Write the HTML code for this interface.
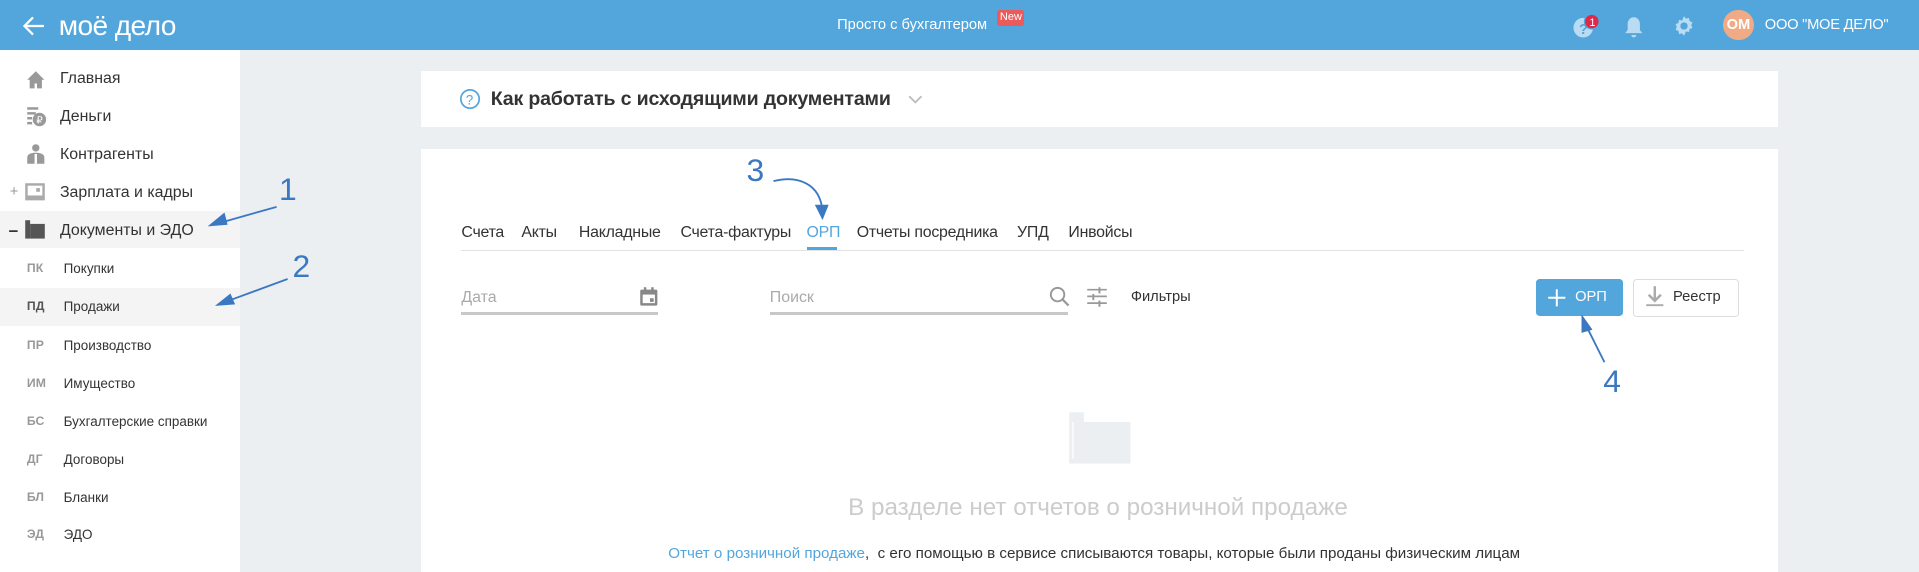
<!DOCTYPE html>
<html><head><meta charset="utf-8"><style>
html,body{margin:0;padding:0;overflow:hidden;width:1919px;height:572px;background:#eceff2}
#w{zoom:1.22385;width:1568px;height:468px;position:relative;font-family:"Liberation Sans",Arial,sans-serif;overflow:hidden;background:#eceff2}
.a{position:absolute;white-space:nowrap}
.hdr{left:0;top:0;width:1568px;height:41px;background:#53a6dc}
.sb{left:0;top:41px;width:196px;height:427px;background:#fff}
.it{font-size:13px;color:#333;left:49px}
.sc{font-size:10px;color:#999;left:22px;font-weight:bold}
.st{font-size:11px;color:#333;left:52px}
.card{background:#fff}
.tab{font-size:13px;color:#333;top:183px;letter-spacing:-0.2px}
.ann{color:#3a78c2;font-size:26px}
</style></head><body><div id="w">
<div class="a hdr"></div>
<svg class="a" style="left:18px;top:12px" width="20" height="18" viewBox="0 0 20 18"><path d="M18 9H3M9 2L2 9l7 7" stroke="#fff" stroke-width="1.8" fill="none"/></svg>
<div class="a" style="left:48px;top:8px;font-size:23px;color:#fff;letter-spacing:-0.5px">моё дело</div>
<div class="a" style="left:684px;top:14px;font-size:12px;color:#fff">Просто с бухгалтером</div>
<div class="a" style="left:815px;top:8px;width:22px;height:13px;background:#ec5b5b;color:#fff;font-size:9px;text-align:center;line-height:13px;border-radius:2px">New</div>
<svg class="a" style="left:1284px;top:11px" width="24" height="22"><circle cx="10" cy="12" r="8" fill="#b9dcf3"/><text x="6.5" y="17" font-size="12" font-weight="bold" fill="#53a6dc" font-family="Liberation Sans">?</text><circle cx="17" cy="7" r="6" fill="#e0294a" stroke="#53a6dc"/><text x="15" y="10.5" font-size="9" fill="#fff" font-family="Liberation Sans">1</text></svg>
<svg class="a" style="left:1327px;top:13px" width="16" height="18"><path d="M8 1c-3 0-5 2.5-5 5.5v5L1 14h14l-2-2.5v-5C13 3.5 11 1 8 1z M6 15.5h4a2 2 0 01-4 0z" fill="#b9dcf3"/></svg>
<svg class="a" style="left:1367px;top:12px" width="18" height="18" viewBox="0 0 18 18"><path d="M9 1l1.6 2 2.5-.6.4 2.5 2.4 1-1 2.3 1 2.3-2.4 1-.4 2.5-2.5-.6L9 17l-1.6-2-2.5.6-.4-2.5-2.4-1 1-2.3-1-2.3 2.4-1 .4-2.5 2.5.6z" fill="#b9dcf3"/><circle cx="9" cy="9" r="3" fill="#53a6dc"/></svg>
<div class="a" style="left:1408px;top:8px;width:25px;height:25px;border-radius:50%;background:#f0ab86;color:#fff;font-size:12px;font-weight:bold;text-align:center;line-height:25px">ОМ</div>
<div class="a" style="left:1442px;top:14px;font-size:12px;color:#fff;letter-spacing:-0.2px">ООО "МОЕ ДЕЛО"</div>

<div class="a sb"></div>
<div class="a" style="left:0;top:172px;width:196px;height:31px;background:#f4f4f4"></div>
<div class="a" style="left:0;top:235px;width:196px;height:31px;background:#f4f4f4"></div>
<svg class="a" style="left:21px;top:57px" width="16" height="16"><path d="M8 1L1 8h2v7h4v-4h2v4h4V8h2z" fill="#999"/></svg>
<svg class="a" style="left:21px;top:87px" width="17" height="17"><rect x="1" y="1" width="9" height="2" fill="#999"/><rect x="1" y="5" width="7" height="2" fill="#999"/><rect x="1" y="9" width="4" height="2" fill="#999"/><rect x="1" y="13" width="4" height="2" fill="#999"/><circle cx="11" cy="11" r="5.5" fill="#999"/><text x="8.5" y="14.5" font-size="8" fill="#fff" font-family="Liberation Sans">₽</text></svg>
<svg class="a" style="left:21px;top:117px" width="16" height="18"><circle cx="8" cy="4" r="3" fill="#999"/><path d="M1 17v-5c0-3 3-4 7-4s7 1 7 4v5z" fill="#999"/><path d="M7 9h2v8H7z" fill="#fff"/></svg>
<div class="a" style="left:8px;top:150px;font-size:12px;color:#999">+</div>
<svg class="a" style="left:20px;top:149px" width="18" height="16"><rect x="1" y="1" width="16" height="14" fill="#aaa"/><rect x="3" y="3" width="12" height="8" fill="#fff"/><rect x="10" y="5" width="3" height="3" fill="#aaa"/></svg>
<div class="a" style="left:7px;top:180px;font-size:14px;color:#333;font-weight:bold">–</div>
<svg class="a" style="left:20px;top:179px" width="18" height="17"><rect x="1" y="1" width="4" height="15" fill="#555"/><rect x="5" y="4" width="12" height="12" fill="#555"/></svg>
<div class="a it" style="top:57px">Главная</div>
<div class="a it" style="top:88px">Деньги</div>
<div class="a it" style="top:119px">Контрагенты</div>
<div class="a it" style="top:150px">Зарплата и кадры</div>
<div class="a it" style="top:181px">Документы и ЭДО</div>
<div class="a sc" style="top:213px">ПК</div><div class="a st" style="top:213px">Покупки</div>
<div class="a sc" style="top:244px;color:#555">ПД</div><div class="a st" style="top:244px">Продажи</div>
<div class="a sc" style="top:276px">ПР</div><div class="a st" style="top:276px">Производство</div>
<div class="a sc" style="top:307px">ИМ</div><div class="a st" style="top:307px">Имущество</div>
<div class="a sc" style="top:338px">БС</div><div class="a st" style="top:338px">Бухгалтерские справки</div>
<div class="a sc" style="top:369px">ДГ</div><div class="a st" style="top:369px">Договоры</div>
<div class="a sc" style="top:400px">БЛ</div><div class="a st" style="top:400px">Бланки</div>
<div class="a sc" style="top:431px">ЭД</div><div class="a st" style="top:431px">ЭДО</div>

<div class="a card" style="left:344px;top:58px;width:1109px;height:46px"></div>
<svg class="a" style="left:375px;top:72px" width="18" height="18"><circle cx="9" cy="9" r="7.5" fill="none" stroke="#53a6dc" stroke-width="1.4"/><text x="5.5" y="13.5" font-size="11" fill="#53a6dc" font-family="Liberation Sans">?</text></svg>
<div class="a" style="left:401px;top:72px;font-size:16px;color:#333;font-weight:bold;letter-spacing:-0.15px">Как работать с исходящими документами</div>
<svg class="a" style="left:742px;top:78px" width="12" height="8"><path d="M1 1l5 5 5-5" stroke="#bbb" stroke-width="1.5" fill="none"/></svg>

<div class="a card" style="left:344px;top:122px;width:1109px;height:346px"></div>
<div class="a tab" style="left:377px">Счета</div>
<div class="a tab" style="left:426px">Акты</div>
<div class="a tab" style="left:473px">Накладные</div>
<div class="a tab" style="left:556px">Счета-фактуры</div>
<div class="a tab" style="left:659px;color:#53a6dc">ОРП</div>
<div class="a tab" style="left:700px">Отчеты посредника</div>
<div class="a tab" style="left:831px">УПД</div>
<div class="a tab" style="left:873px">Инвойсы</div>
<div class="a" style="left:377px;top:204px;width:1048px;height:1px;background:#e3e3e3"></div>
<div class="a" style="left:659px;top:202px;width:25px;height:2px;background:#53a6dc"></div>

<div class="a" style="left:377px;top:236px;font-size:13px;color:#aaa">Дата</div>
<svg class="a" style="left:522px;top:234px" width="16" height="17"><rect x="1" y="3" width="14" height="13" rx="1" fill="#888"/><rect x="3" y="7" width="10" height="7" fill="#fff"/><rect x="4" y="1" width="2" height="4" fill="#888"/><rect x="10" y="1" width="2" height="4" fill="#888"/><rect x="9" y="10" width="3" height="3" fill="#888"/></svg>
<div class="a" style="left:377px;top:255px;width:161px;height:2px;background:#c8c8c8"></div>
<div class="a" style="left:629px;top:236px;font-size:13px;color:#aaa">Поиск</div>
<svg class="a" style="left:857px;top:234px" width="17" height="17"><circle cx="7" cy="7" r="5.5" stroke="#999" stroke-width="1.6" fill="none"/><path d="M11 11l5 5" stroke="#999" stroke-width="1.8"/></svg>
<div class="a" style="left:629px;top:255px;width:244px;height:2px;background:#c8c8c8"></div>
<svg class="a" style="left:887px;top:234px" width="18" height="17"><path d="M1 3h16M1 8.5h16M1 14h16" stroke="#999" stroke-width="1.4"/><path d="M11 1v5M6 6.5v5M11 12v5" stroke="#999" stroke-width="1.6"/></svg>
<div class="a" style="left:924px;top:236px;font-size:12px;color:#333">Фильтры</div>

<div class="a" style="left:1255px;top:228px;width:71px;height:30px;background:#53a6dc;border-radius:3px"></div>
<svg class="a" style="left:1264px;top:235px" width="16" height="16"><path d="M8 1v14M1 8h14" stroke="#fff" stroke-width="1.6"/></svg>
<div class="a" style="left:1287px;top:236px;font-size:12px;color:#fff">ОРП</div>
<div class="a" style="left:1334px;top:228px;width:85px;height:29px;border:1px solid #ddd;border-radius:3px;background:#fff"></div>
<svg class="a" style="left:1344px;top:233px" width="16" height="18"><path d="M8 1v11M3 8l5 5 5-5" stroke="#aaa" stroke-width="2" fill="none"/><path d="M1 16.5h14" stroke="#aaa" stroke-width="1.5"/></svg>
<div class="a" style="left:1367px;top:236px;font-size:12px;color:#333">Реестр</div>

<svg class="a" style="left:873px;top:336px" width="52" height="44"><path d="M1 1h12v8h38v34H1z" fill="#eceff2"/><path d="M4 9v30" stroke="#fff" stroke-width="1"/></svg>
<div class="a" style="left:693px;top:404px;font-size:19.8px;color:#ccc">В разделе нет отчетов о розничной продаже</div>
<div class="a" style="left:546px;top:445px;font-size:12.4px;color:#333"><span style="color:#53a6dc">Отчет о розничной продаже</span>,&nbsp; с его помощью в сервисе списываются товары, которые были проданы физическим лицам</div>

<div class="a ann" style="left:228px;top:140px">1</div>
<div class="a ann" style="left:239px;top:203px">2</div>
<div class="a ann" style="left:610px;top:124px">3</div>
<div class="a ann" style="left:1310px;top:297px">4</div>
<svg class="a" style="left:0;top:0" width="1568" height="468">
<g stroke="#3a78c2" stroke-width="1.5" fill="#3a78c2">
<path d="M226 169L180 182" fill="none"/><path d="M172 184l11-9 2 8z"/>
<path d="M235 228L186 246" fill="none"/><path d="M178 249l10-8 3 7z"/>
<path d="M632 148c20-5 38 2 40 24" fill="none"/><path d="M672 178l-5-10h9z"/>
<path d="M1311 296L1296 266" fill="none"/><path d="M1293 259l7 10-7 2z"/>
</g></svg>
</div></body></html>
